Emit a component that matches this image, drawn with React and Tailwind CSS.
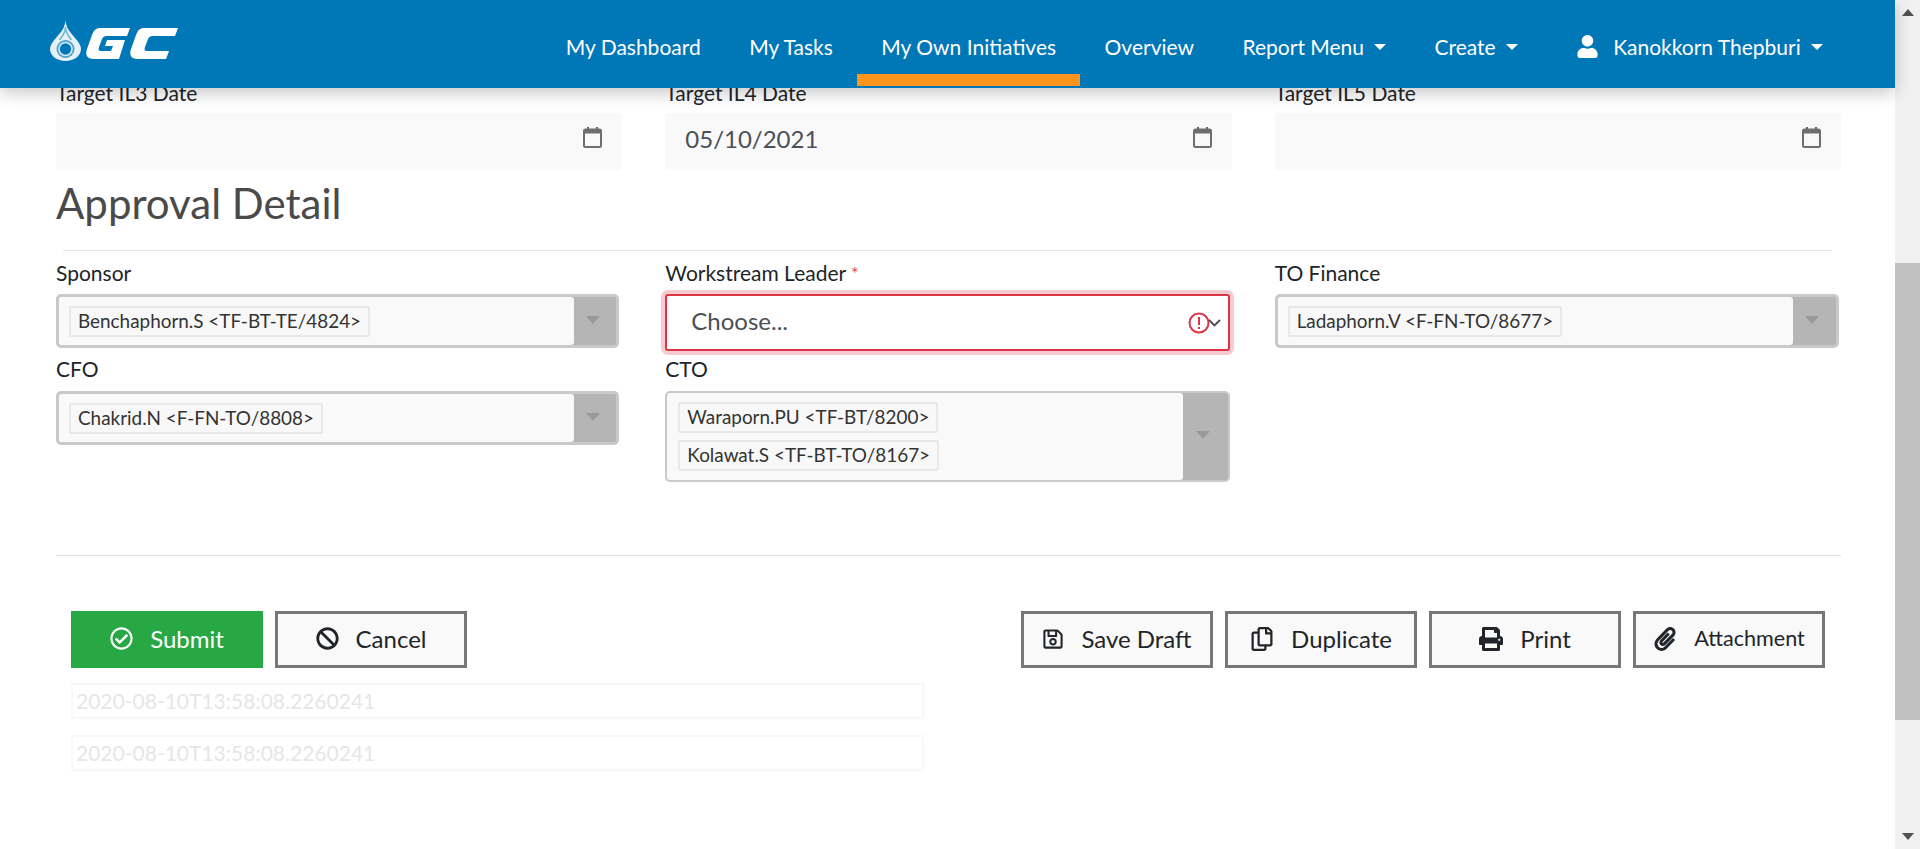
import React from "react";
import { FaUser, FaBan, FaRegCheckCircle, FaRegCopy, FaPrint, FaPaperclip, FaRegSave } from "react-icons/fa";

const GcLogo = () => (
  <svg width="128" height="41" viewBox="0 0 128 41" className="mb-[8px] shrink-0">
    <path d="M15.5 0C16 8 20 12 25 18c4 4 6 8 6 11 0 7-7 12-15.5 12S0 36 0 29c0-3 2-7 6-11C11 12 15 8 15.5 0z" fill="#e4f1f8" />
    <path d="M15.5 7c0 6-3 9-6 13M15.5 7c0 6 3 9 6 13" stroke="#6fb4d8" strokeWidth="1.5" fill="none" />
    <circle cx="15.5" cy="29" r="9" fill="#4d9fcb" />
    <circle cx="15.5" cy="29" r="6.5" fill="#0077b7" stroke="#d5e9f4" strokeWidth="1.6" />
    <path d="M50 8h30l-3 8H57c-3 0-4 1-5 3l-3 8c-1 3 0 4 2 4h10l2-5h-8l2-6h18l-6 19H44c-7 0-9-4-7-10l5-14c2-5 4-7 8-7z" fill="#fff" />
    <path d="M94 8h34l-3 8h-22c-3 0-4 1-5 3l-3 8c-1 3 0 4 2 4h22l-3 8H88c-7 0-9-4-7-10l5-14c2-5 4-7 8-7z" fill="#fff" />
  </svg>
);

const Caret = () => (
  <span className="ml-[10px] inline-block border-x-[6px] border-t-[6px] border-x-transparent border-t-white" />
);

const NavItem = ({ label, active, caret, icon }) => (
  <div className="relative flex h-full items-center px-[24.25px] pt-[5px] text-[21px] text-white">
    {icon}
    <span>{label}</span>
    {caret && <Caret />}
    {active && <span className="absolute bottom-[2px] left-0 right-0 h-[12px] bg-[#ff961b]" />}
  </div>
);

const CalendarIcon = () => (
  <svg width="19" height="21" viewBox="0 0 19 21" className="mb-[4px] shrink-0">
    <rect x="4" y="0" width="2" height="4" fill="#666" />
    <rect x="13" y="0" width="2" height="4" fill="#666" />
    <rect x="1" y="2.5" width="17" height="17.5" rx="1.5" fill="none" stroke="#6e6e6e" strokeWidth="2" />
    <rect x="1" y="2.5" width="17" height="4" fill="#6e6e6e" />
  </svg>
);

const DateField = ({ label, value }) => (
  <div>
    <label className="mb-[8px] block h-[24px] text-[21px] leading-[24px] text-[#212529]">{label}</label>
    <div className="flex h-[57px] items-center justify-between rounded-[2px] bg-[#f9f9f9] pb-[5px] pl-[20px] pr-[20px] text-[24px] text-[#495057]">
      <span>{value}</span>
      <CalendarIcon />
    </div>
  </div>
);

const Chip = ({ children }) => (
  <div className="flex h-[31px] w-fit items-center rounded-[2px] border-2 border-[#e8e8e8] bg-[#f8f8f8] px-[7px] text-[18.9px] text-[#333]">
    {children}
  </div>
);

const MultiSelect = ({ label, chips, labelGap = "mb-[8px]", indicator = "w-[42px]", thin }) => (
  <div>
    <label className={`block h-[24px] text-[21px] leading-[22px] text-[#212529] ${labelGap}`}>{label}</label>
    <div
      className={`flex min-h-[54px] overflow-hidden rounded-[5px] bg-[#b5b5b5] ${
        thin ? "border-2 border-[#c9c9c9]" : "border-[3px] border-[#c9c9c9]"
      }`}
    >
      <div
        className={`flex flex-1 flex-col justify-center gap-[7px] rounded-r-[3px] bg-[#f9f9f9] ${
          thin ? "py-[9px] pl-[11px]" : "py-[8px] pl-[10px]"
        }`}
      >
        {chips.map((c) => (
          <Chip key={c}>{c}</Chip>
        ))}
      </div>
      <div className={`flex items-center justify-center pb-[3px] pr-[4px] ${indicator}`}>
        <span className="inline-block border-x-[7px] border-t-[8px] border-x-transparent border-t-[#999]" />
      </div>
    </div>
  </div>
);

const Btn = ({ icon, label, green, small }) => (
  <button
    className={
      green
        ? "flex h-[57px] w-[192px] items-center justify-center gap-[17px] bg-[#28a745] pb-[2px] text-[24px] text-white"
        : `flex h-[57px] w-[192px] items-center justify-center gap-[17px] border-[3px] border-[#777] bg-[#f9f9f9] pb-[2px] text-[#212529] ${small ? "text-[21.6px]" : "text-[24px]"}`
    }
  >
    {icon}
    <span>{label}</span>
  </button>
);

const FaintField = () => (
  <div className="flex h-[36px] w-[853px] items-center border-2 border-[#f8f8f8] pl-[3px] text-[21px] text-[#e6e6e6]">
    2020-08-10T13:58:08.2260241
  </div>
);

export default function App() {
  return (
    <div className="flex h-[849px] w-full overflow-hidden bg-white font-['Lato',sans-serif]">
      <div className="flex min-w-0 flex-1 flex-col">
        <header className="relative z-10 flex h-[88px] shrink-0 items-center bg-[#0077b7] pl-[50px] pr-[48px] shadow-[0_5px_16px_rgba(0,0,0,0.22)]">
          <GcLogo />
          <nav className="ml-auto flex h-full items-center">
            <NavItem label="My Dashboard" />
            <NavItem label="My Tasks" />
            <NavItem label="My Own Initiatives" active />
            <NavItem label="Overview" />
            <NavItem label="Report Menu" caret />
            <NavItem label="Create" caret />
            <NavItem label="Kanokkorn Thepburi" caret icon={<FaUser className="ml-[10px] mr-[14px] text-[23px]" />} />
          </nav>
        </header>

        <main className="mt-[-7px] pl-[56px] pr-[54px]">
          <div className="grid grid-cols-3 gap-x-[43px]">
            <DateField label="Target IL3 Date" />
            <DateField label="Target IL4 Date" value="05/10/2021" />
            <DateField label="Target IL5 Date" />
          </div>

          <h2 className="mt-[8px] h-[64px] pt-[1px] text-[42px] leading-[48px] text-[#4a4a4a]">Approval Detail</h2>
          <div className="ml-[7px] mr-[9px] mt-[8px] border-t border-[#e5e5e5]" />

          <div className="mt-[11px] grid grid-cols-3 gap-x-[43px]">
            <div className="pr-[3px]">
              <MultiSelect label="Sponsor" chips={["Benchaphorn.S <TF-BT-TE/4824>"]} />
            </div>
            <div>
              <label className="mb-[8px] block h-[24px] text-[21px] leading-[22px] text-[#212529]">
                Workstream Leader <span className="align-top text-[18px] text-[#e83e5c]">*</span>
              </label>
              <div className="mr-[2px] flex h-[57px] items-center justify-between rounded-[3px] border-2 border-[#dc3545] bg-white pl-[24px] pr-[7px] text-[24px] text-[#495057] shadow-[0_0_0_4px_rgba(220,53,69,0.25)]">
                <span className="pb-[4px]">Choose...</span>
                <span className="flex items-center">
                  <svg width="22" height="22" viewBox="0 0 22 22">
                    <circle cx="11" cy="11" r="9.5" fill="none" stroke="#dc3545" strokeWidth="2" />
                    <rect x="10" y="5" width="2" height="8" fill="#dc3545" />
                    <rect x="10" y="15" width="2" height="2" fill="#dc3545" />
                  </svg>
                  <svg width="13" height="9" viewBox="0 0 13 9" className="ml-[-2px]">
                    <path d="M1 2l5.500 5.500L12 2" fill="none" stroke="#4a4f55" strokeWidth="1.8" />
                  </svg>
                </span>
              </div>
            </div>
            <div className="pr-[2px]">
              <MultiSelect label="TO Finance" chips={["Ladaphorn.V <F-FN-TO/8677>"]} indicator="w-[43px]" />
            </div>
            <div className="pr-[3px] pt-[7px]">
              <MultiSelect label="CFO" labelGap="mb-[9px]" chips={["Chakrid.N <F-FN-TO/8808>"]} />
            </div>
            <div className="pr-[2px] pt-[7px]">
              <MultiSelect
                label="CTO"
                labelGap="mb-[9px]"
                chips={["Waraporn.PU <TF-BT/8200>", "Kolawat.S <TF-BT-TO/8167>"]}
                indicator="w-[45px]"
                thin
              />
            </div>
          </div>

          <div className="mt-[73px] border-t border-[#e0e0e0]" />

          <div className="mt-[55px] flex justify-between pl-[15px] pr-[16px]">
            <div className="flex gap-[12px]">
              <Btn green label="Submit" icon={<FaRegCheckCircle className="text-[23px]" />} />
              <Btn label="Cancel" icon={<FaBan className="text-[23px]" />} />
            </div>
            <div className="flex gap-[12px]">
              <Btn label="Save Draft" icon={<FaRegSave className="text-[22px]" />} />
              <Btn label="Duplicate" icon={<FaRegCopy className="text-[24px]" />} />
              <Btn label="Print" icon={<FaPrint className="text-[24px]" />} />
              <Btn small label="Attachment" icon={<FaPaperclip className="text-[24px]" />} />
            </div>
          </div>

          <div className="mt-[15px] flex flex-col gap-[16px] px-[15px]">
            <FaintField />
            <FaintField />
          </div>
        </main>
      </div>

      <div className="flex w-[25px] shrink-0 flex-col bg-[#f1f1f1]">
        <div className="flex h-[25px] items-center justify-center">
          <span className="inline-block border-x-[6px] border-b-[7px] border-x-transparent border-b-[#505050]" />
        </div>
        <div className="mt-[238px] h-[457px] bg-[#c1c1c1]" />
        <div className="mt-auto flex h-[25px] items-center justify-center">
          <span className="inline-block border-x-[6px] border-t-[7px] border-x-transparent border-t-[#505050]" />
        </div>
      </div>
    </div>
  );
}
